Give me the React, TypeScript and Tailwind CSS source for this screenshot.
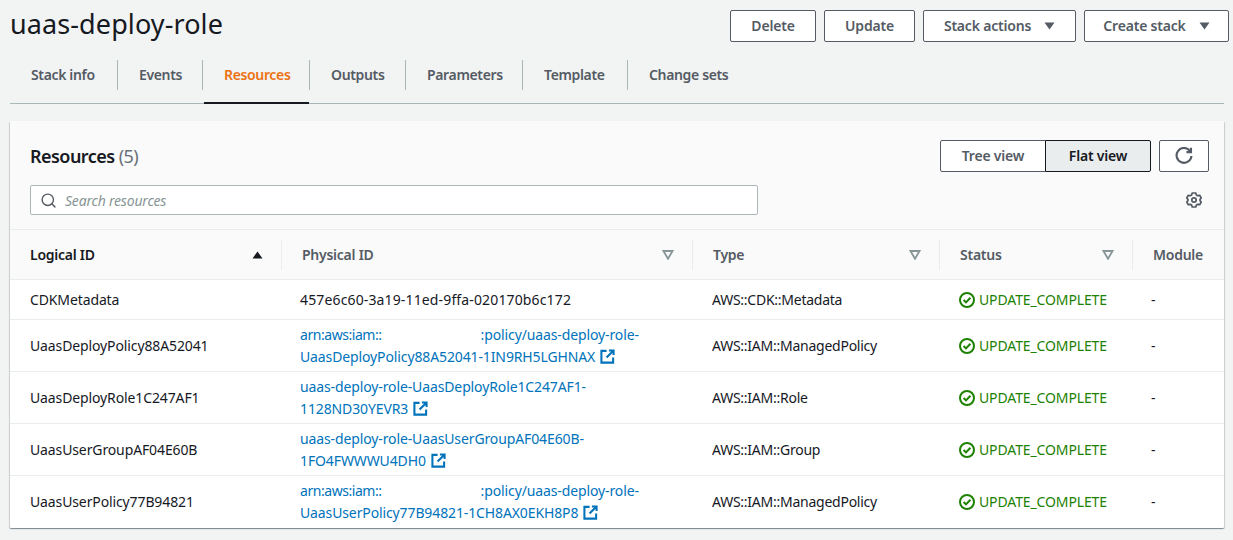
import { Search } from "lucide-react";

const tabs = [
  { name: "Stack info", width: "w-[108px]" },
  { name: "Events", width: "w-[85px]" },
  { name: "Resources", width: "w-[107px]", active: true },
  { name: "Outputs", width: "w-[96px]" },
  { name: "Parameters", width: "w-[117px]" },
  { name: "Template", width: "w-[105px]" },
  { name: "Change sets", width: "w-[125px]", last: true },
];

const rows = [
  { id: "CDKMetadata", type: "AWS::CDK::Metadata", plain: "457e6c60-3a19-11ed-9ffa-020170b6c172" },
  { id: "UaasDeployPolicy88A52041", type: "AWS::IAM::ManagedPolicy", arn: true, line1: ":policy/uaas-deploy-role-", line2: "UaasDeployPolicy88A52041-1IN9RH5LGHNAX" },
  { id: "UaasDeployRole1C247AF1", type: "AWS::IAM::Role", line1: "uaas-deploy-role-UaasDeployRole1C247AF1-", line2: "1128ND30YEVR3" },
  { id: "UaasUserGroupAF04E60B", type: "AWS::IAM::Group", line1: "uaas-deploy-role-UaasUserGroupAF04E60B-", line2: "1FO4FWWWU4DH0" },
  { id: "UaasUserPolicy77B94821", type: "AWS::IAM::ManagedPolicy", arn: true, line1: ":policy/uaas-deploy-role-", line2: "UaasUserPolicy77B94821-1CH8AX0EKH8P8" },
];

const columns = "grid grid-cols-[271px_411px_247px_193px_92px]";

function Caret() {
  return (
    <svg width="11" height="8" viewBox="0 0 11 8" className="ml-[13px]">
      <path d="M0.5 0.5h10L5.5 7.5z" fill="#545b64" />
    </svg>
  );
}

function FilterArrow() {
  return (
    <svg width="12" height="10" viewBox="0 0 12 10">
      <path d="M1.5 1h9L6 8.8z" fill="none" stroke="#879596" strokeWidth="1.8" />
    </svg>
  );
}

function ExternalIcon() {
  return (
    <svg width="15" height="15" viewBox="0 0 16 16" fill="none" stroke="#0073bb" strokeWidth="2.2" className="ml-[5px] inline-block align-[-2px]">
      <path d="M7 2H1.5v12.5H14V9" />
      <path d="M9.5 1.5h5V6.5M14.5 1.5L7 9" />
    </svg>
  );
}

function CheckIcon() {
  return (
    <svg width="16" height="16" viewBox="0 0 16 16" fill="none" stroke="#1d8102" strokeWidth="2" className="mr-[4px] shrink-0">
      <circle cx="8" cy="8" r="7" />
      <path d="M4.6 8l2.4 2.4 4.4-4.6" />
    </svg>
  );
}

function RefreshIcon() {
  return (
    <svg width="18" height="18" viewBox="0 0 16 16" fill="none" stroke="#545b64" strokeWidth="1.9">
      <path d="M13.4 3.6A6.6 6.6 0 1 0 14.6 8" />
      <path d="M14.2 0.6v4h-4" />
    </svg>
  );
}

function GearIcon() {
  return (
    <svg width="16" height="16" viewBox="0 0 16 16" fill="none" stroke="#545b64" strokeWidth="1.7" strokeLinejoin="round" className="mr-[2px]">
      <path d="M6.2 1h3.6l.6 1.9 1.4.8 1.9-.4 1.6 2.7-1.3 1.4v1.2l1.3 1.4-1.6 2.7-1.9-.4-1.4.8-.6 1.9H6.2l-.6-1.9-1.4-.8-1.9.4L.7 10l1.3-1.4V7.4L.7 6l1.6-2.7 1.9.4 1.4-.8z" />
      <circle cx="8" cy="8" r="2.2" />
    </svg>
  );
}

function HeaderCell({ label, active, filter, first }: { label: string; active?: boolean; filter?: boolean; first?: boolean }) {
  return (
    <div className="flex h-[49px] items-center">
      <div className={`flex h-[30px] w-full items-center justify-between pr-[18px] ${first ? "pl-[20px]" : "border-l border-[#eaeded] pl-[20px]"}`}>
        <span className={`font-semibold tracking-[-0.25px] ${active ? "text-[#16191f]" : "text-[#545b64]"}`}>{label}</span>
        {active && (
          <svg width="11" height="8" viewBox="0 0 11 8">
            <path d="M5.5 0.5l5 7H.5z" fill="#16191f" />
          </svg>
        )}
        {filter && <FilterArrow />}
      </div>
    </div>
  );
}

export default function App() {
  return (
    <div className="h-[540px] w-[1233px] overflow-hidden bg-[#f2f3f3] pl-[10px] text-[14px] leading-[22px] tracking-[-0.12px] text-[#16191f] [font-family:'Noto_Sans',sans-serif]">
      <div className="w-[1214px]">
        <div className="flex h-[60px] items-start justify-between pt-[10px]">
          <h1 className="-mt-[1px] text-[27px] leading-[30px] font-normal tracking-[0.1px]">uaas-deploy-role</h1>
          <div className="-mr-[5px] flex gap-[8px] font-semibold tracking-[-0.2px] text-[#545b64]">
            <button className="h-[32px] w-[86px] rounded-[2px] border border-[#545b64] bg-white font-semibold">Delete</button>
            <button className="h-[32px] w-[91px] rounded-[2px] border border-[#545b64] bg-white font-semibold">Update</button>
            <button className="flex h-[32px] w-[153px] items-center justify-center rounded-[2px] border border-[#545b64] bg-white font-semibold">
              Stack actions
              <Caret />
            </button>
            <button className="flex h-[32px] w-[145px] items-center justify-center rounded-[2px] border border-[#545b64] bg-white font-semibold">
              Create stack
              <Caret />
            </button>
          </div>
        </div>

        <div className="flex h-[44px] border-b border-[#aab7b8]">
          {tabs.map((tab) => (
            <div key={tab.name} className={`h-[43px] ${tab.width}`}>
              <div className={`flex h-[30px] items-center pl-[21px] font-semibold tracking-[-0.35px] ${tab.last ? "" : "border-r border-[#aab7b8]"} ${tab.active ? "text-[#ec7211]" : "text-[#545b64]"}`}>
                {tab.name}
              </div>
              {tab.active && <div className="mt-[12px] ml-[1px] h-[2px] w-[105px] bg-[#16191f]" />}
            </div>
          ))}
        </div>

        <div className="mt-[17px] h-[407px] rounded-[1px] bg-white shadow-[0_1px_1px_0_rgba(0,28,36,0.3),1px_1px_1px_0_rgba(0,28,36,0.15),-1px_1px_1px_0_rgba(0,28,36,0.15)]">
          <div className="h-[109px] border-b border-[#eaeded] bg-[#fafafa] px-[20px] pt-[19px]">
            <div className="flex h-[32px] items-center justify-between">
              <h2 className="text-[18px] leading-[22px] font-semibold tracking-[-0.55px]">
                Resources <span className="font-normal text-[#687078]">(5)</span>
              </h2>
              <div className="-mr-[5px] flex items-center font-semibold tracking-[-0.2px]">
                <button className="h-[32px] w-[106px] rounded-l-[2px] border border-[#545b64] bg-white font-semibold text-[#545b64]">Tree view</button>
                <button className="-ml-px h-[32px] w-[106px] rounded-r-[2px] border border-[#16191f] bg-[#eaeded] font-semibold text-[#16191f]">Flat view</button>
                <button className="ml-[8px] flex h-[32px] w-[50px] items-center justify-center rounded-[2px] border border-[#545b64] bg-white">
                  <RefreshIcon />
                </button>
              </div>
            </div>
            <div className="mt-[13px] flex items-center justify-between">
              <div className="flex h-[30px] w-[728px] items-center rounded-[2px] border border-[#aab7b8] bg-white pl-[9px]">
                <Search size={17} strokeWidth={2} color="#545b64" />
                <span className="mt-[1px] ml-[8px] text-[14px] tracking-[-0.2px] text-[#879596] italic">Search resources</span>
              </div>
              <GearIcon />
            </div>
          </div>

          <div className={`${columns} border-b border-[#eaeded] bg-[#fafafa]`}>
            <HeaderCell label="Logical ID" active first />
            <HeaderCell label="Physical ID" filter />
            <HeaderCell label="Type" filter />
            <HeaderCell label="Status" filter />
            <HeaderCell label="Module" />
          </div>

          {rows.map((row, i) => (
            <div key={row.id} className={`${columns} items-center ${i === 0 ? "h-[40px]" : i === rows.length - 1 ? "h-[51px]" : "h-[52px]"} ${i === rows.length - 1 ? "" : "border-b border-[#eaeded]"}`}>
              <div className="pl-[20px]">{row.id}</div>
              <div className="pl-[19px]">
                {row.plain ? (
                  <span className="tracking-[0.14px]">{row.plain}</span>
                ) : (
                  <div className="text-[#0073bb]">
                    <div>
                      {row.arn && (
                        <>
                          <span className="tracking-[-0.45px]">arn:aws:iam::</span>
                          <span className="inline-block w-[99px]" />
                        </>
                      )}
                      {row.line1}
                    </div>
                    <div>
                      {row.line2}
                      <ExternalIcon />
                    </div>
                  </div>
                )}
              </div>
              <div className="pl-[20px] tracking-[-0.25px]">{row.type}</div>
              <div className="flex items-center pl-[20px] text-[#1d8102]">
                <CheckIcon />
                UPDATE_COMPLETE
              </div>
              <div className="pl-[19px]">-</div>
            </div>
          ))}
        </div>
      </div>
    </div>
  );
}
